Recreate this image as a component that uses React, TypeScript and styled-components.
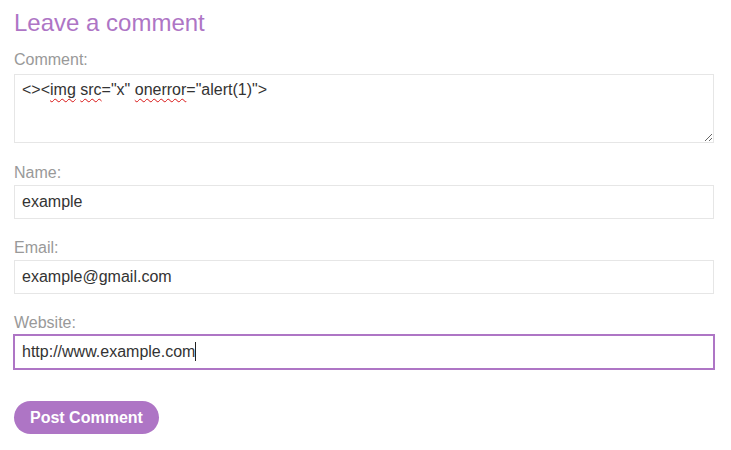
import React, { useEffect, useRef, useState } from "react";
import styled, { createGlobalStyle } from "styled-components";

const GlobalStyle = createGlobalStyle`
  html, body { margin: 0; padding: 0; background: #ffffff; }
  body { font-family: "Liberation Sans", Arial, sans-serif; color: #333333; }
  * { box-sizing: border-box; }
`;

const purple = "#ae75c5";
const fieldFont = `16px "Liberation Sans", Arial, sans-serif`;

const Page = styled.form`
  width: 700px;
  margin: 0 0 0 14px;
  display: flex;
  flex-direction: column;
`;

const Heading = styled.h1`
  margin: 9px 0 0;
  font-size: 24px;
  line-height: 27px;
  font-weight: normal;
  color: ${purple};
`;

const Field = styled.div<{ $top: number }>`
  display: flex;
  flex-direction: column;
  margin-top: ${(p) => p.$top}px;
`;

const Label = styled.label<{ $gap: number }>`
  display: block;
  font-size: 16px;
  line-height: 18px;
  color: #999999;
  margin-bottom: ${(p) => p.$gap}px;
`;

const TextBox = styled.div`
  height: 69px;
  border: 1px solid #e6e6e6;
  padding: 5px 7px;
  font-size: 16px;
  line-height: 19px;
  color: #333333;
  resize: vertical;
  overflow: auto;
  white-space: pre-wrap;
  outline: none;
`;

const Misspelt = styled.span`
  text-decoration-line: underline;
  text-decoration-style: wavy;
  text-decoration-color: #d81515;
  text-decoration-thickness: 1px;
  text-underline-offset: 3px;
`;

const InputWrap = styled.div`
  position: relative;
`;

const Input = styled.input<{ $focused?: boolean }>`
  display: block;
  width: 100%;
  height: 34px;
  margin: 0;
  padding: 0 7px;
  font: ${fieldFont};
  color: #333333;
  caret-color: transparent;
  background: #ffffff;
  border: 1px solid ${(p) => (p.$focused ? purple : "#e6e6e6")};
  box-shadow: ${(p) => (p.$focused ? `0 0 0 1px ${purple}` : "none")};
  outline: none;
  border-radius: 0;
`;

const Caret = styled.span`
  position: absolute;
  top: 7px;
  width: 1px;
  height: 19px;
  background: #222222;
  pointer-events: none;
`;

const Button = styled.button`
  align-self: flex-start;
  margin-top: 32px;
  height: 33px;
  padding: 0 16px;
  border: none;
  border-radius: 17px;
  background: ${purple};
  color: #ffffff;
  font-family: "Liberation Sans", Arial, sans-serif;
  font-size: 16px;
  font-weight: bold;
  cursor: pointer;
`;

const WEBSITE = "http://www.example.com";

function measure(text: string): number {
  const c = document.createElement("canvas");
  const ctx = c.getContext("2d");
  if (!ctx) return 173;
  ctx.font = fieldFont;
  return ctx.measureText(text).width;
}

export default function App() {
  const [caretX, setCaretX] = useState(181);
  const siteRef = useRef<HTMLInputElement>(null);
  useEffect(() => {
    const w = measure(WEBSITE);
    setCaretX(Math.round(8 + w));
  }, []);

  return (
    <>
      <GlobalStyle />
      <Page onSubmit={(e) => e.preventDefault()}>
        <Heading>Leave a comment</Heading>
        <Field $top={15}>
          <Label $gap={5}>Comment:</Label>
          <TextBox role="textbox" aria-multiline="true">
            {"<><"}
            <Misspelt>img</Misspelt> <Misspelt>src</Misspelt>
            {'="x" '}
            <Misspelt>onerror</Misspelt>
            {'="alert(1)">'}
          </TextBox>
        </Field>
        <Field $top={21}>
          <Label $gap={3}>Name:</Label>
          <Input defaultValue="example" />
        </Field>
        <Field $top={20}>
          <Label $gap={3}>Email:</Label>
          <Input defaultValue="example@gmail.com" />
        </Field>
        <Field $top={20}>
          <Label $gap={3}>Website:</Label>
          <InputWrap>
            <Input ref={siteRef} $focused defaultValue={WEBSITE} />
            <Caret style={{ left: caretX }} />
          </InputWrap>
        </Field>
        <Button type="submit">Post Comment</Button>
      </Page>
    </>
  );
}
